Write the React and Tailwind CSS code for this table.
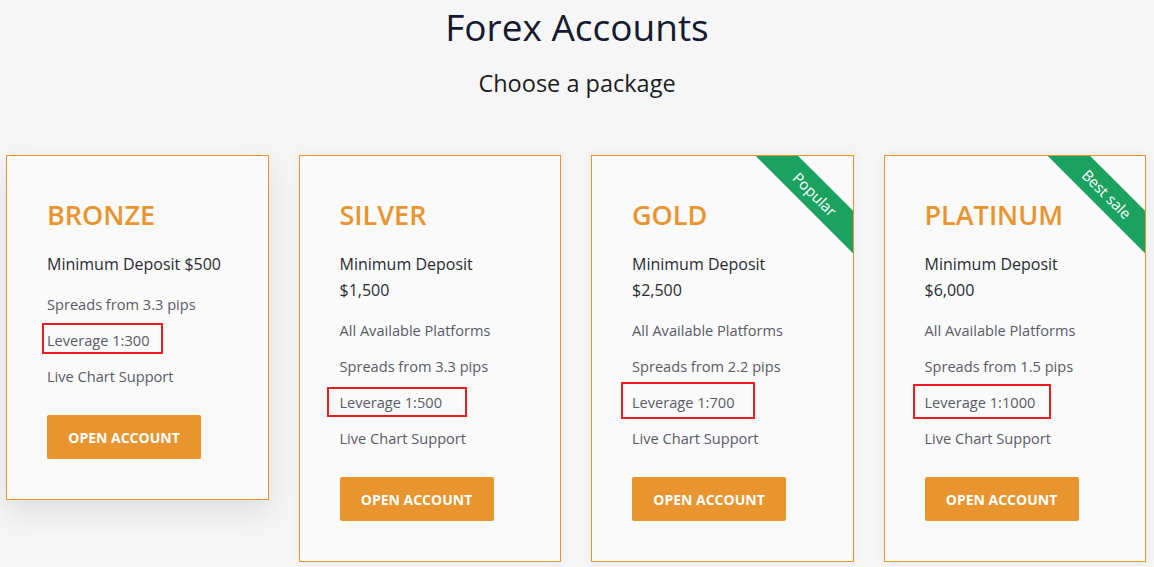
import React from 'react';

const plans = [
    {
        name: 'BRONZE',
        deposit: ['Minimum Deposit $500'],
        features: ['Spreads from 3.3 pips', 'Leverage 1:300', 'Live Chart Support'],
        mark: 1,
        box: 'left-[-5px] top-[1px] w-[121px] h-[31px]',
        shadow: 'shadow-[0_12px_28px_rgba(0,0,0,0.10)]',
    },
    {
        name: 'SILVER',
        deposit: ['Minimum Deposit', '$1,500'],
        features: ['All Available Platforms', 'Spreads from 3.3 pips', 'Leverage 1:500', 'Live Chart Support'],
        mark: 2,
        box: 'left-[-13px] top-[3px] w-[140px] h-[30px]',
        shadow: 'shadow-[0_0_14px_rgba(0,0,0,0.05)]',
    },
    {
        name: 'GOLD',
        deposit: ['Minimum Deposit', '$2,500'],
        features: ['All Available Platforms', 'Spreads from 2.2 pips', 'Leverage 1:700', 'Live Chart Support'],
        mark: 2,
        box: 'left-[-11px] top-[-2px] w-[134px] h-[37px]',
        shadow: 'shadow-[0_0_14px_rgba(0,0,0,0.05)]',
        ribbon: 'Popular',
    },
    {
        name: 'PLATINUM',
        deposit: ['Minimum Deposit', '$6,000'],
        features: ['All Available Platforms', 'Spreads from 1.5 pips', 'Leverage 1:1000', 'Live Chart Support'],
        mark: 2,
        box: 'left-[-12px] top-[0px] w-[138px] h-[35px]',
        shadow: 'shadow-[0_0_14px_rgba(0,0,0,0.05)]',
        ribbon: 'Best sale',
    },
];

const PlanCard = ({ plan }) => (
    <div className={`relative overflow-hidden border border-[#e8942f] bg-[#fafafa] pl-[40px] pr-4 pt-[43px] pb-[40px] ${plan.shadow}`}>
        {plan.ribbon && (
            <div className="absolute right-[-42px] top-[23px] w-[160px] h-[30px] rotate-45 bg-[#1ba160] flex items-center justify-center text-white text-[15px]">
                {plan.ribbon}
            </div>
        )}
        <h2 className="text-[27px] leading-[32px] font-semibold text-[#e8942f]">{plan.name}</h2>
        <div className="mt-[20px] text-[16px] leading-[26px] font-medium text-[#2a2a34]">
            {plan.deposit.map((line) => (
                <div key={line}>{line}</div>
            ))}
        </div>
        <ul className="mt-[9px] text-[14.6px] leading-[36px] text-[#5a5a68]">
            {plan.features.map((f, i) => (
                <li key={f} className="relative">
                    {i === plan.mark && (
                        <span className={`absolute border-2 border-[#ec1c24] ${plan.box}`} />
                    )}
                    {f}
                </li>
            ))}
        </ul>
        <button className="mt-[21px] h-[44px] w-[154px] rounded-[2px] bg-[#e8942f] text-white text-[14px] font-bold">
            OPEN ACCOUNT
        </button>
    </div>
);

export default function App() {
    return (
        <div className="w-full min-h-screen bg-[#f6f6f6] pt-[5px] font-['Open_Sans',sans-serif] overflow-hidden">
            <h1 className="text-center text-[37px] leading-[44px] text-[#151a30]">Forex Accounts</h1>
            <p className="mt-[18px] text-center text-[23.5px] leading-[32px] text-[#1d1d24]">Choose a package</p>
            <div className="mt-[56px] ml-[6px] w-[1140px] grid grid-cols-4 gap-[30px] items-start">
                {plans.map((p) => (
                    <PlanCard key={p.name} plan={p} />
                ))}
            </div>
        </div>
    );
}
